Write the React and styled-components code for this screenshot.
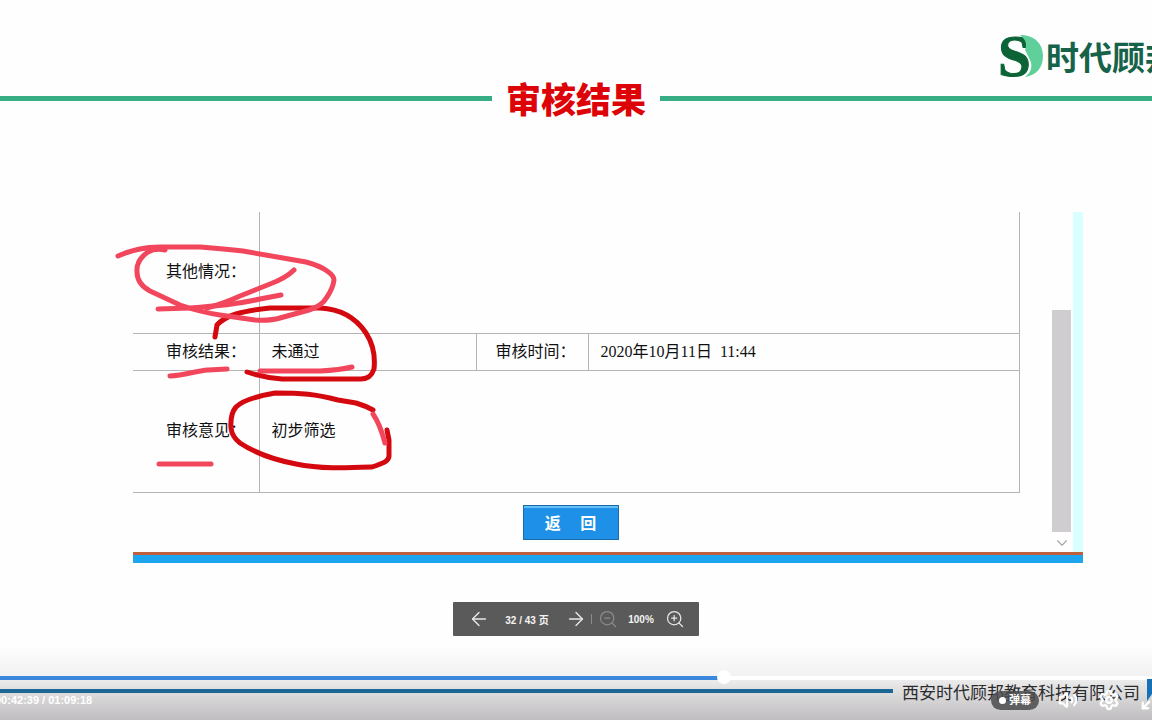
import React, { useState } from "react";
import styled, { createGlobalStyle } from "styled-components";
import {
  ArrowLeft,
  ArrowRight,
  ChevronDown,
  Maximize2,
  Settings,
  Volume2,
  ZoomIn,
  ZoomOut
} from "lucide-react";

const GlobalStyle = createGlobalStyle`
  * {
    box-sizing: border-box;
  }
  body {
    margin: 0;
    background: #fefefe;
    color: #111;
    font-family: "Liberation Sans", "Noto Sans CJK SC", sans-serif;
  }
  button {
    padding: 0;
    border: 0;
    background: none;
    color: inherit;
    font-family: inherit;
    cursor: pointer;
  }
`;

const Page = styled.div`
  display: flex;
  flex-direction: column;
  min-height: 100vh;
  overflow: hidden;
`;

const Brand = styled.div`
  display: flex;
  align-self: flex-end;
  align-items: center;
  gap: 2px;
  width: 152px;
  height: 77px;
  padding-top: 34px;
  overflow: hidden;
  color: #17634a;
  font-family: "Noto Sans CJK SC", sans-serif;
  font-size: 33px;
  font-weight: 700;
  line-height: 42px;
  white-space: nowrap;
`;

const BrandMark = styled.svg`
  flex: none;
  width: 44px;
  height: 44px;
`;

const TitleBar = styled.div`
  display: flex;
  align-items: center;
  gap: 14px;
  height: 42px;

  &::before,
  &::after {
    content: "";
    flex: 1;
    height: 5px;
    background: #36ad83;
  }
`;

const Title = styled.h1`
  margin: 0;
  color: #dc0408;
  font-family: "Noto Sans CJK SC", sans-serif;
  font-size: 35px;
  font-weight: 900;
  line-height: 42px;
`;

const Sheet = styled.main`
  position: relative;
  margin: 93px 69px 0 133px;
`;

const SheetBody = styled.div`
  display: flex;
  height: 340px;
`;

const SheetEdge = styled.div`
  height: 11px;
  border-top: 3px solid #c05f3c;
  background: #1ea5f0;
`;

const Content = styled.div`
  flex: 1;
`;

const ReviewTable = styled.table`
  width: 100%;
  border-collapse: collapse;
  table-layout: fixed;
  font-family: "Liberation Serif", "Noto Sans CJK SC", serif;
  font-size: 16px;
  line-height: 20px;
`;

const Column = styled.col`
  width: ${props => props.$width || "auto"};
`;

const ReviewRow = styled.tr`
  height: ${props => props.$height};

  & + & {
    border-top: 1px solid #b4b4b4;
  }
  &:last-child {
    border-bottom: 1px solid #b4b4b4;
  }
`;

const Label = styled.th`
  padding: 0 0 0 ${props => (props.$inner ? "19px" : "33px")};
  border-right: 1px solid #b4b4b4;
  font-weight: 400;
  text-align: left;
  white-space: nowrap;
`;

const Value = styled.td`
  padding: 0 0 0 12px;
  border-right: 1px solid #b4b4b4;
  white-space: pre;
`;

const Actions = styled.div`
  display: flex;
  justify-content: center;
  padding: 12px 12px 0 0;
`;

const BackButton = styled.button`
  && {
    width: 96px;
    height: 35px;
    border: 1px solid #1a6ba8;
    background: #1e90e8;
    box-shadow: inset 0 2px 0 #62c0f6;
    color: white;
    font-family: "Noto Sans CJK SC", sans-serif;
    font-size: 16px;
    font-weight: 700;
    line-height: 32px;
    white-space: pre;
  }
`;

const ScrollBar = styled.div`
  display: flex;
  flex-direction: column;
  align-items: center;
  justify-content: flex-end;
  width: 19px;
  margin: 0 2px 0 32px;
  color: #a5a5a5;
`;

const ScrollThumb = styled.div`
  width: 100%;
  height: 222px;
  margin-bottom: 2px;
  background: #d0cdd0;
`;

const SideStrip = styled.div`
  width: 10px;
  background: #d9ffff;
`;

const Ink = styled.svg`
  position: absolute;
  top: -12px;
  left: -33px;
  width: 310px;
  height: 300px;
  fill: none;
  stroke-width: 5;
  stroke-linecap: round;
  stroke-linejoin: round;
  pointer-events: none;
`;

const Pager = styled.nav`
  display: flex;
  align-self: center;
  align-items: center;
  justify-content: center;
  width: 246px;
  height: 34px;
  margin-top: 39px;
  border-radius: 1px;
  background: #5a5a5a;
  color: #f4f4f4;
  font-size: 10px;
  font-weight: 700;
  white-space: nowrap;
`;

const PagerButton = styled.button`
  && {
    display: flex;
    color: ${props => (props.disabled ? "#8c8c8c" : "#e8e8e8")};
  }
`;

const PagerText = styled.span`
  width: ${props => (props.$wide ? "75px" : "47px")};
  text-align: center;
`;

const Divider = styled.span`
  width: 1px;
  height: 10px;
  margin: 0 6px 0 4px;
  background: #8c8c8c;
`;

const Footer = styled.footer`
  position: relative;
  height: 75px;
  margin-top: auto;
  padding-top: 26px;
  background: linear-gradient(#fefefe, #f3f2f3 40%, #e2e1e2 58%, #bfbdbf);
`;

const Seek = styled.input`
  display: block;
  width: 100%;
  height: 14px;
  margin: 0;
  appearance: none;
  background: none;

  &::-webkit-slider-runnable-track {
    height: 4px;
    background: linear-gradient(
      to right,
      #3a87dc ${props => props.$played}%,
      #fff ${props => props.$played}%
    );
  }
  &::-webkit-slider-thumb {
    appearance: none;
    width: 14px;
    height: 14px;
    margin-top: -6px;
    border-radius: 50%;
    background: #fff;
  }
`;

const CompanyRow = styled.div`
  display: flex;
  align-items: center;
  height: 20px;
  margin-top: -4px;
`;

const CompanyRule = styled.div`
  flex: 1;
  height: 4px;
  background: #1c6793;
`;

const Company = styled.span`
  margin: 0 7px 0 9px;
  padding-top: 2px;
  color: #2b2b2e;
  font-family: "Noto Sans CJK SC", sans-serif;
  font-size: 17px;
  line-height: 20px;
  white-space: nowrap;
`;

const CornerMark = styled.svg`
  width: 5px;
  height: 24px;
`;

const Controls = styled.div`
  position: absolute;
  right: 0;
  bottom: 8px;
  left: 0;
  display: flex;
  align-items: center;
  height: 24px;
  overflow: hidden;
  color: white;
`;

const Time = styled.span`
  margin: 0 auto 0 -5px;
  font-size: 11px;
  font-weight: 700;
`;

const DanmuButton = styled.button`
  && {
    display: flex;
    align-items: center;
    justify-content: center;
    gap: 3px;
    width: 48px;
    height: 19px;
    margin-right: 19px;
    border-radius: 10px;
    background: rgba(75, 75, 78, 0.85);
    font-size: 11px;
    font-weight: 700;
    line-height: 18px;
  }

  &::before {
    content: "";
    width: 7px;
    height: 7px;
    border-radius: 50%;
    background: white;
  }
`;

const ControlButton = styled.button`
  && {
    display: flex;
    flex: none;
    margin-right: ${props => (props.$last ? "-10px" : "20px")};
  }
`;

const PINK = "#f2465c";
const RED = "#d4090f";

const strokes = [
  { color: RED, d: "M215 337L217 325C225 316 240 311 270 308L320 308C342 309 356 318 366 333C375 347 375 360 374 369C372 375 369 379 361 379L282 379Q265 378 247 372" },
  { color: RED, d: "M373 410Q366 406 356 403L338 400C315 394 302 393 275 393C258 396 243 400 236 407Q230 414 231 428Q232 437 240 443C255 453 275 460 296 464C320 469 345 468 372 467C384 463 389 461 389 456V440L387 430" },
  { color: PINK, d: "M118 256Q138 247 160 247L200 247Q225 249 243 251L306 262C325 267 334 275 334 280Q333 288 327 297Q322 306 309 310L280 318Q270 321 255 320L220 315Q200 312 180 305L150 291Q137 284 137 272Q136 260 148 252Q155 248 165 250" },
  { color: PINK, d: "M158 309L190 308Q235 305 260 299L281 295" },
  { color: PINK, d: "M294 270Q286 278 270 284L240 296Q225 303 207 308" },
  { color: PINK, d: "M170 376C186 375 195 371 208 370L227 369" },
  { color: PINK, d: "M260 371L320 371Q340 370 352 367" },
  { color: PINK, d: "M373 414Q380 424 385 443" },
  { color: PINK, d: "M159 464H211" }
];

const Logo = () => (
  <BrandMark viewBox="0 0 44 44" aria-hidden="true">
    <text
      x="-2"
      y="42"
      fill="#0b6336"
      stroke="#0b6336"
      strokeWidth="1"
      fontFamily="Liberation Serif, serif"
      fontSize="59"
      fontWeight="700"
    >
      S
    </text>
    <path
      d="M20 1C36 1 43 11 43 22C43 33 37 41 25 43C31 39 33 32 30 26C28 21 27 20 25 16C28 10 25 5 20 1Z"
      fill="#5fd09a"
    />
  </BrandMark>
);

const App = () => {
  const [page, setPage] = useState(32);
  const [position, setPosition] = useState(630);

  return (
    <Page>
      <GlobalStyle />
      <Brand>
        <Logo />
        <span>时代顾邦</span>
      </Brand>
      <TitleBar>
        <Title>审核结果</Title>
      </TitleBar>
      <Sheet>
        <SheetBody>
          <Content>
            <ReviewTable>
              <colgroup>
                <Column $width="126px" />
                <Column $width="217px" />
                <Column $width="112px" />
                <Column />
              </colgroup>
              <tbody>
                <ReviewRow $height="121px">
                  <Label scope="row">其他情况：</Label>
                  <Value colSpan={3}></Value>
                </ReviewRow>
                <ReviewRow $height="37px">
                  <Label scope="row">审核结果：</Label>
                  <Value>未通过</Value>
                  <Label scope="row" $inner>审核时间：</Label>
                  <Value>{"2020年10月11日  11:44"}</Value>
                </ReviewRow>
                <ReviewRow $height="122px">
                  <Label scope="row">审核意见：</Label>
                  <Value colSpan={3}>初步筛选</Value>
                </ReviewRow>
              </tbody>
            </ReviewTable>
            <Actions>
              <BackButton type="button">{"返\u3000 回"}</BackButton>
            </Actions>
          </Content>
          <ScrollBar>
            <ScrollThumb />
            <ChevronDown size={18} strokeWidth={1.5} />
          </ScrollBar>
          <SideStrip />
        </SheetBody>
        <SheetEdge />
        <Ink viewBox="100 200 310 300">
          {strokes.map((stroke, index) => (
            <path key={index} d={stroke.d} stroke={stroke.color} />
          ))}
        </Ink>
      </Sheet>
      <Pager aria-label="翻页">
        <PagerButton aria-label="上一页" onClick={() => setPage(page - 1)}>
          <ArrowLeft size={22} strokeWidth={1.5} />
        </PagerButton>
        <PagerText $wide>{page} / 43 页</PagerText>
        <PagerButton aria-label="下一页" onClick={() => setPage(page + 1)}>
          <ArrowRight size={22} strokeWidth={1.5} />
        </PagerButton>
        <Divider />
        <PagerButton aria-label="缩小" disabled>
          <ZoomOut size={20} strokeWidth={1.5} />
        </PagerButton>
        <PagerText>100%</PagerText>
        <PagerButton aria-label="放大">
          <ZoomIn size={20} strokeWidth={1.5} />
        </PagerButton>
      </Pager>
      <Footer>
        <Seek
          type="range"
          aria-label="播放进度"
          min="0"
          max="1000"
          value={position}
          $played={position / 10 - 0.7}
          onChange={e => setPosition(Number(e.target.value))}
        />
        <CompanyRow>
          <CompanyRule />
          <Company>西安时代顾邦教育科技有限公司</Company>
          <CornerMark viewBox="0 0 5 24">
            <path d="M0 0H5V15L0 22Z" fill="#1670b8" />
          </CornerMark>
        </CompanyRow>
        <Controls>
          <Time>00:42:39 / 01:09:18</Time>
          <DanmuButton type="button">弹幕</DanmuButton>
          <ControlButton type="button" aria-label="音量">
            <Volume2 size={20} strokeWidth={2.5} />
          </ControlButton>
          <ControlButton type="button" aria-label="设置">
            <Settings size={22} strokeWidth={2.5} />
          </ControlButton>
          <ControlButton type="button" aria-label="全屏" $last>
            <Maximize2 size={22} strokeWidth={2.5} />
          </ControlButton>
        </Controls>
      </Footer>
    </Page>
  );
};

export default App;
